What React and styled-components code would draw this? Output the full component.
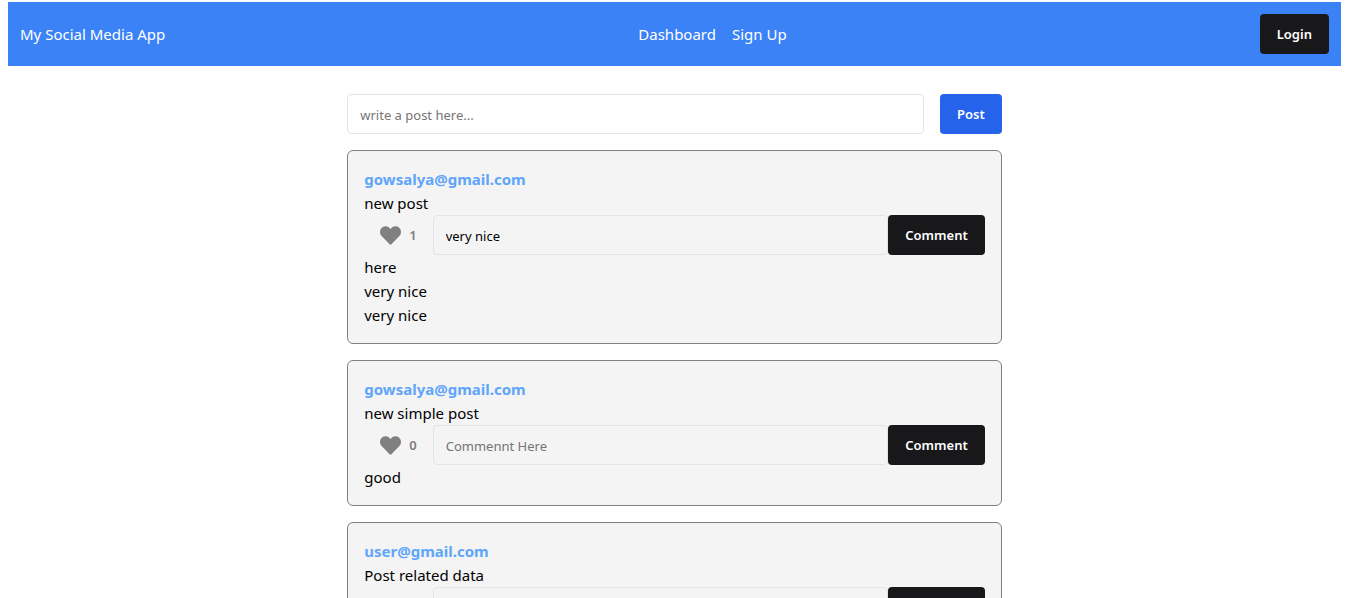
import React from "react";
import styled, { createGlobalStyle } from "styled-components";

const GlobalStyle = createGlobalStyle`
  *, *::before, *::after { box-sizing: border-box; }
  body {
    margin: 2px 8px 8px;
    background: #fff;
    color: #000;
    font: 15px/24px "Segoe UI", "Noto Sans", "Open Sans", sans-serif;
  }
`;

const Navbar = styled.nav`
  display: flex;
  align-items: center;
  justify-content: space-between;
  padding: 12px;
  background: #3b82f6;
  color: #fff;
`;

const NavLinks = styled.div`
  display: flex;
  gap: 16px;
`;

const NavLink = styled.a`
  color: inherit;
  text-decoration: none;
`;

const Button = styled.button`
  flex: none;
  height: 40px;
  padding: 0 16px;
  border: 1px solid transparent;
  border-radius: 4px;
  background: ${(p) => (p.$primary ? "#2563eb" : "#18181b")};
  color: #fff;
  font: 600 13px/20px "Segoe UI", "Noto Sans", "Open Sans", sans-serif;
  cursor: pointer;
`;

const Page = styled.main`
  padding: 28px 12px;
`;

const Feed = styled.div`
  display: flex;
  flex-direction: column;
  gap: 16px;
  width: 50%;
  margin: 0 auto;
`;

const Composer = styled.form`
  display: flex;
  gap: 16px;
`;

const TextInput = styled.input`
  flex: 1;
  min-width: 0;
  height: 40px;
  padding: 2px 12px 0;
  border: 1px solid #e4e4e7;
  border-radius: 4px;
  background: transparent;
  color: #000;
  font: 13px/20px "Segoe UI", "Noto Sans", "Open Sans", sans-serif;
  &::placeholder { color: #757575; opacity: 1; }
`;

const Card = styled.article`
  padding: 16px;
  border: 1px solid #808080;
  border-radius: 6px;
  background: #f4f4f4;
`;

const Author = styled.h2`
  margin: 0;
  color: #60a5fa;
  font-size: 15px;
  line-height: 24px;
  font-weight: 700;
`;

const Line = styled.p`
  margin: 0;
`;

const Actions = styled.form`
  display: flex;
`;

const LikeButton = styled.button`
  display: flex;
  align-items: center;
  gap: 8px;
  height: 40px;
  padding: 0 16px;
  border: 0;
  background: transparent;
  color: #808080;
  font: 600 13px/20px "Segoe UI", "Noto Sans", "Open Sans", sans-serif;
  cursor: pointer;
`;

function HeartIcon() {
  return (
    <svg width="21" height="21" viewBox="0 0 512 512" fill="currentColor" aria-hidden="true">
      <path d="M462.3 62.6C407.5 15.9 326 24.3 275.7 76.2L256 96.5l-19.7-20.3C186.1 24.3 104.5 15.9 49.7 62.6c-62.8 53.6-66.1 149.8-9.9 207.9l193.5 199.8c12.5 12.9 32.8 12.9 45.3 0l193.5-199.8c56.3-58.1 53-154.3-9.8-207.9z" />
    </svg>
  );
}

const posts = [
  { id: 1, author: "gowsalya@gmail.com", text: "new post", likes: 1, draft: "very nice", comments: ["here", "very nice", "very nice"] },
  { id: 2, author: "gowsalya@gmail.com", text: "new simple post", likes: 0, draft: "", comments: ["good"] },
  { id: 3, author: "user@gmail.com", text: "Post related data", likes: 1, draft: "", comments: [] },
];

const stay = (e) => e.preventDefault();

function Post({ post }) {
  return (
    <Card>
      <Author>{post.author}</Author>
      <Line>{post.text}</Line>
      <Actions onSubmit={stay}>
        <LikeButton type="button" aria-label={`Like, ${post.likes}`}>
          <HeartIcon />
          {post.likes}
        </LikeButton>
        <TextInput aria-label="Comment" placeholder="Commennt Here" defaultValue={post.draft} />
        <Button type="submit">Comment</Button>
      </Actions>
      {post.comments.map((comment, i) => (
        <Line key={i}>{comment}</Line>
      ))}
    </Card>
  );
}

export default function App() {
  return (
    <>
      <GlobalStyle />
      <Navbar>
        <span>My Social Media App</span>
        <NavLinks>
          <NavLink href="#dashboard">Dashboard</NavLink>
          <NavLink href="#signup">Sign Up</NavLink>
        </NavLinks>
        <Button type="button">Login</Button>
      </Navbar>
      <Page>
        <Feed>
          <Composer onSubmit={stay}>
            <TextInput aria-label="New post" placeholder="write a post here..." />
            <Button type="submit" $primary>Post</Button>
          </Composer>
          {posts.map((post) => (
            <Post key={post.id} post={post} />
          ))}
        </Feed>
      </Page>
    </>
  );
}
